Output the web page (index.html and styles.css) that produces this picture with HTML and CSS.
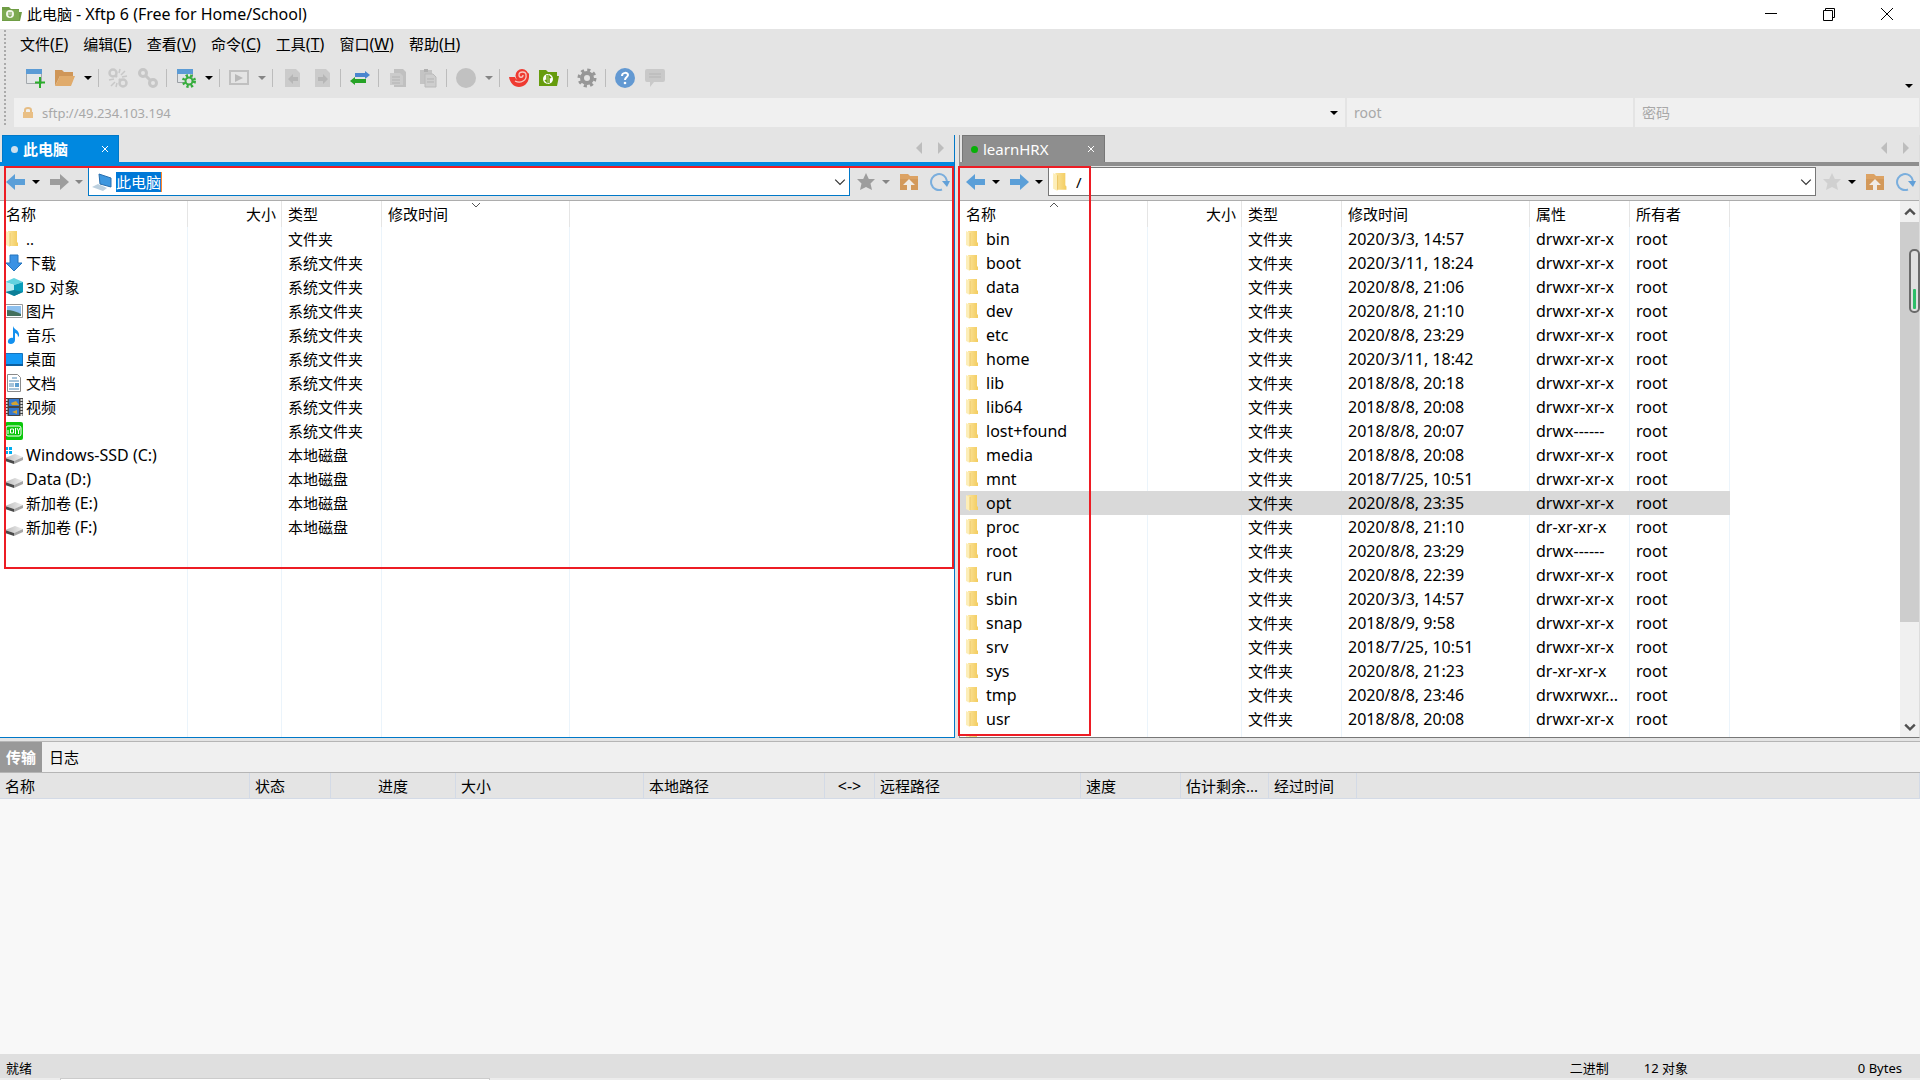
FILE: index.html
```html
<!DOCTYPE html>
<html lang="zh-CN">
<head>
    <meta charset="UTF-8">
    <meta name="viewport" content="width=device-width, initial-scale=1.0">
    <title>此电脑 - Xftp 6 (Free for Home/School)</title>
    <link rel="stylesheet" href="styles.css">
</head>
<body>
    <!-- Icon shapes used more than once -->
    <svg class="defs" aria-hidden="true">
        <defs>
            <linearGradient id="gold" x1="0" x2="1"><stop offset="0" stop-color="#fbe49b"/><stop offset="1" stop-color="#f3cc5f"/></linearGradient>
            <linearGradient id="metal" x1="0" x2="1"><stop offset="0" stop-color="#bbb"/><stop offset="1" stop-color="#eee"/></linearGradient>
        </defs>
        <symbol id="folder" viewBox="0 0 18 18"><path d="M3 1h9v11l1 1v3H5z" fill="url(#gold)"/><path d="M1 1l4 2v14l-4-2z" fill="#fdeeb8"/><path d="M5 3v13" stroke="#edc869" stroke-width="1"/></symbol>
        <symbol id="drive" viewBox="0 0 18 18"><path d="M0 12l10-4 8 3-9 4z" fill="url(#metal)"/><path d="M0 12l9 3v3l-9-3z" fill="#4a4a4a"/><path d="M9 15l9-4v3l-9 4z" fill="#a6a6a6"/></symbol>
        <symbol id="caret" viewBox="0 0 8 8"><path d="M0 2h8L4 6z" fill="currentColor"/></symbol>
        <symbol id="back" viewBox="0 0 20 20"><path d="M0 10l9-8v5h10v6H9v5z" fill="currentColor"/></symbol>
        <symbol id="forward" viewBox="0 0 20 20"><path d="M20 10l-9-8v5H1v6h10v5z" fill="currentColor"/></symbol>
        <symbol id="star" viewBox="0 0 20 20"><path d="M10 1l2.800 6H19l-4.500 4.500L16 18l-6-3-6 3 1.500-6.500L1 7h6.200z" fill="currentColor"/></symbol>
        <symbol id="up" viewBox="0 0 20 20"><path d="M1 2h8l2 2h8v14H1z" fill="#dca263"/><path d="M1 7h18v11H1z" fill="#d3995a"/><path d="M10 7l6 6h-4v5H8v-5H4z" fill="#f0ebe4"/></symbol>
        <symbol id="refresh" viewBox="0 0 20 20"><path d="M12 17.500A8 8 0 1 1 17 9" fill="none" stroke="#7aaedd" stroke-width="2"/><path d="M12 9h8l-3 6z" fill="#62a0d8"/></symbol>
        <symbol id="chev" viewBox="0 0 10 10"><path d="M1 3l4 4 4-4" fill="none" stroke="currentColor"/></symbol>
        <symbol id="close" viewBox="0 0 8 8"><path d="M1 1l6 6M7 1L1 7" stroke="currentColor"/></symbol>
        <symbol id="prev" viewBox="0 0 8 12"><path d="M7 0v12L1 6z" fill="#bdbdbd"/></symbol>
        <symbol id="next" viewBox="0 0 8 12"><path d="M1 0v12l6-6z" fill="#bdbdbd"/></symbol>
    </svg>

    <!-- Title bar -->
    <header class="titlebar">
        <svg class="app-icon" viewBox="0 0 20 16"><path d="M0 1h7l2 2h8v3h3l-2 9H0z" fill="#6f9d45"/><path d="M0 4h17v10H0z" fill="#7daa52"/><circle cx="8" cy="8" r="4" fill="#f2f7ea"/><path d="M7 6v4h2V6" fill="none" stroke="#5f8f34"/></svg>
        <h1>此电脑 <span class="wide">- Xftp 6 (Free for Home/School)</span></h1>
        <div class="window-buttons">
            <button aria-label="最小化"><svg viewBox="0 0 14 14"><path d="M1 6.500h12" stroke="#000"/></svg></button>
            <button aria-label="还原"><svg viewBox="0 0 14 14"><path d="M1.500 3.500h9v10h-9zM3.500 3.500v-2h9v9h-2" fill="none" stroke="#000"/></svg></button>
            <button aria-label="关闭"><svg viewBox="0 0 14 14"><path d="M1 1l12 12M13 1L1 13" stroke="#000"/></svg></button>
        </div>
    </header>

    <nav class="menubar">
        <button>文件<span class="wide">(<u>F</u>)</span></button>
        <button>编辑<span class="wide">(<u>E</u>)</span></button>
        <button>查看<span class="wide">(<u>V</u>)</span></button>
        <button>命令<span class="wide">(<u>C</u>)</span></button>
        <button>工具<span class="wide">(<u>T</u>)</span></button>
        <button>窗口<span class="wide">(<u>W</u>)</span></button>
        <button>帮助<span class="wide">(<u>H</u>)</span></button>
    </nav>

    <!-- Toolbar -->
    <div class="toolbar">
        <button class="tool" aria-label="新建"><svg viewBox="0 0 20 20"><path d="M1.500 1.500h15v14h-15z" fill="#e3e6e8" stroke="#a3a8ac"/><path d="M1 1h16v5H1z" fill="#5b9bd5"/><path d="M15 9v11M10 14.500h10" stroke="#2bad2b" stroke-width="2"/></svg></button>
        <button class="tool" aria-label="打开"><svg viewBox="0 0 20 20"><path d="M0 2h7l2 2h9v4H5L0 18z" fill="#cf9658"/><path d="M5 8h15l-4 10H0z" fill="#e0ab6c"/></svg></button>
        <button class="drop" aria-label="打开列表"><svg><use href="#caret"/></svg></button>
        <span class="sep"></span>
        <button class="tool" aria-label="重新连接"><svg viewBox="0 0 20 20" fill="none" stroke="#c8c8c8" stroke-width="2.500"><circle cx="5" cy="5" r="3.500"/><circle cx="15" cy="15" r="3.500"/><path d="M7 7l2 2M11 11l2 2"/><path d="M12 1l-1 4M17 3l-4 4M19 8l-5 1M1 12l5-1M3 18l4-4M8 19l1-4" stroke-width="1.500"/></svg></button>
        <button class="tool" aria-label="断开"><svg viewBox="0 0 20 20" fill="none" stroke="#c6c6c6" stroke-width="3"><circle cx="5" cy="5" r="3.500"/><circle cx="15" cy="15" r="3.500"/><path d="M7 7l6 6"/></svg></button>
        <span class="sep"></span>
        <button class="tool" aria-label="属性"><svg viewBox="0 0 20 20"><path d="M1.500 1.500h15v13h-15z" fill="#e0e4e7" stroke="#9a9fa4"/><path d="M1 1h16v5H1z" fill="#5b9bd5"/><circle cx="13" cy="13" r="5" fill="#e3e3e3" stroke="#36ad3d" stroke-width="4" stroke-dasharray="2 2"/><circle cx="13" cy="13" r="3.500" fill="#e3e3e3" stroke="#36ad3d" stroke-width="2"/></svg></button>
        <button class="drop" aria-label="属性列表"><svg><use href="#caret"/></svg></button>
        <span class="sep"></span>
        <button class="tool" aria-label="运行"><svg viewBox="0 0 20 20"><rect x="1" y="3" width="18" height="13" fill="none" stroke="#c0c0c0" stroke-width="2"/><path d="M6 6l8 4-8 4z" fill="#b8b8b8"/></svg></button>
        <button class="drop off" aria-label="运行列表"><svg><use href="#caret"/></svg></button>
        <span class="sep"></span>
        <button class="tool" aria-label="传到左侧"><svg viewBox="0 0 20 20"><path d="M3 1h11l4 4v14H3z" fill="#cbcbcb"/><path d="M6 11l5-5v3h5v4h-5v3z" fill="#b6b6b6"/></svg></button>
        <button class="tool" aria-label="传到右侧"><svg viewBox="0 0 20 20"><path d="M3 1h11l4 4v14H3z" fill="#cbcbcb"/><path d="M16 11l-5-5v3H6v4h5v3z" fill="#b6b6b6"/></svg></button>
        <span class="sep"></span>
        <button class="tool" aria-label="同步"><svg viewBox="0 0 20 20"><path d="M20 7l-5-4v2H5v4h10v2z" fill="#4a86cf"/><path d="M0 13l5-4v2h11v4H5v2z" fill="#26a326"/></svg></button>
        <span class="sep"></span>
        <button class="tool" aria-label="复制"><svg viewBox="0 0 20 20"><path d="M6 1h9l3 3v15H6z" fill="#c0c0c0"/><path d="M2 5h10l3 3v9H2z" fill="#cbcbcb"/><path d="M4 9h8M4 12h8M4 15h8" stroke="#b3b3b3"/></svg></button>
        <button class="tool" aria-label="粘贴"><svg viewBox="0 0 20 20"><path d="M2 2h12v14H2z" fill="#c4c4c4"/><path d="M6 1h4v3H6z" fill="#b0b0b0"/><path d="M7 6h8l3 3v10H7z" fill="#cecece" stroke="#bababa"/><path d="M9 11h7M9 14h7" stroke="#b3b3b3"/></svg></button>
        <span class="sep"></span>
        <button class="tool" aria-label="浏览"><svg viewBox="0 0 20 20"><circle cx="10" cy="10" r="10" fill="#c1c1c1"/></svg></button>
        <button class="drop off" aria-label="浏览列表"><svg><use href="#caret"/></svg></button>
        <span class="sep"></span>
        <button class="tool" aria-label="Xshell"><svg viewBox="0 0 20 20"><path d="M0 9h6c1 3 3 3 6 2l8-6c1 9-4 14-10 14C5 19 1 15 0 9z" fill="#ef3a31"/><circle cx="13" cy="7.500" r="6.500" fill="#ef3a31"/><path d="M6 13c6 3 12-1 11-6 0-4-7-4-7 0 0 3 4 3 4 0" fill="none" stroke="#f7c9c4" stroke-width="1.300"/></svg></button>
        <button class="tool" aria-label="Xftp"><svg viewBox="0 0 20 20"><path d="M0 2h7l2 2h9v4h2l-2 10H0z" fill="#669c0d"/><circle cx="9" cy="11" r="5" fill="#fff"/><path d="M8 7v7l-2-2M10 15V8l2 2" fill="none" stroke="#669c0d" stroke-width="1.500"/></svg></button>
        <span class="sep"></span>
        <button class="tool" aria-label="选项"><svg viewBox="0 0 20 20"><circle cx="10" cy="10" r="8" fill="none" stroke="#979797" stroke-width="3" stroke-dasharray="3.140 3.140"/><circle cx="10" cy="10" r="5" fill="#e3e3e3" stroke="#979797" stroke-width="4"/></svg></button>
        <span class="sep"></span>
        <button class="tool" aria-label="帮助"><svg viewBox="0 0 20 20"><circle cx="10" cy="10" r="10" fill="#6399d2"/><path d="M7 8c0-4 6-4 6-1 0 2-3 2-3 5" fill="none" stroke="#fff" stroke-width="2"/><circle cx="10" cy="15" r="1.300" fill="#fff"/></svg></button>
        <button class="tool" aria-label="反馈"><svg viewBox="0 0 20 20"><path d="M2 1h16q2 0 2 2v9q0 2-2 2H9l-4 5v-5H2q-2 0-2-2V3q0-2 2-2z" fill="#c9c9c9"/><path d="M4 6h12M4 9h12" stroke="#b5b5b5"/></svg></button>
        <button class="drop more" aria-label="更多"><svg><use href="#caret"/></svg></button>
    </div>

    <!-- Quick connect -->
    <form class="connect">
        <div class="host">
            <svg class="lock" viewBox="0 0 10 12"><path d="M2 6V3q0-2 3-2t3 2v3" fill="none" stroke="#e6bd84" stroke-width="2"/><path d="M0 5h10v6H0z" fill="#e9bf85"/></svg>
            <input type="text" placeholder="sftp://49.234.103.194" aria-label="主机">
            <button type="button" class="drop" aria-label="主机列表"><svg><use href="#caret"/></svg></button>
        </div>
        <input class="user" type="text" placeholder="root" aria-label="用户名">
        <input class="pass" type="password" placeholder="密码" aria-label="密码">
    </form>

    <main class="workspace">
        <!-- Local -->
        <section class="pane local">
            <div class="tabs">
                <button class="tab"><i></i><span>此电脑</span><svg><use href="#close"/></svg></button>
                <div class="tab-nav"><button aria-label="上一个"><svg><use href="#prev"/></svg></button><button aria-label="下一个"><svg><use href="#next"/></svg></button></div>
            </div>
            <div class="pathbar">
                <button class="nav" aria-label="后退"><svg><use href="#back"/></svg></button>
                <button class="drop" aria-label="后退列表"><svg><use href="#caret"/></svg></button>
                <button class="nav off" aria-label="前进"><svg><use href="#forward"/></svg></button>
                <button class="drop off" aria-label="前进列表"><svg><use href="#caret"/></svg></button>
                <div class="path">
                    <svg class="path-icon" viewBox="0 0 20 20"><path d="M7 2l12 4v9L8 12z" fill="#3d97df" stroke="#2a6fae"/><path d="M0 15l6-3 9 4-4 3z" fill="#bcd0df"/></svg>
                    <input class="selected" type="text" value="此电脑" aria-label="本地路径">
                    <button class="open" aria-label="路径列表"><svg><use href="#chev"/></svg></button>
                </div>
                <button class="nav fav" aria-label="收藏"><svg><use href="#star"/></svg></button>
                <button class="drop off" aria-label="收藏列表"><svg><use href="#caret"/></svg></button>
                <button class="nav parent" aria-label="上级"><svg><use href="#up"/></svg></button>
                <button class="nav" aria-label="刷新"><svg><use href="#refresh"/></svg></button>
            </div>
            <div class="list">
                <table class="files">
                    <colgroup><col class="c-name"><col class="c-size"><col class="c-type"><col class="c-date"><col></colgroup>
                    <thead>
                        <tr><th>名称</th><th class="num">大小</th><th>类型</th><th>修改时间<svg class="sort"><use href="#chev"/></svg></th><th></th></tr>
                    </thead>
                    <tbody>
                        <tr><td><svg><use href="#folder"/></svg>..</td><td></td><td>文件夹</td><td></td><td></td></tr>
                        <tr><td><svg viewBox="0 0 18 18"><path d="M5 1h8v8h4l-8 8-8-8h4z" fill="#3b92e4" stroke="#2474bd"/></svg>下载</td><td></td><td>系统文件夹</td><td></td><td></td></tr>
                        <tr><td><svg viewBox="0 0 18 18"><path d="M0 4l9-4 9 4-9 3z" fill="#62d3e0"/><path d="M0 4l9 3v11l-9-4z" fill="#b5edf2"/><path d="M9 7l9-3v10l-9 4z" fill="#0a9dba"/><path d="M0 14l9-2 9 2-9 4z" fill="#0c7f98"/></svg>3D 对象</td><td></td><td>系统文件夹</td><td></td><td></td></tr>
                        <tr><td><svg viewBox="0 0 18 18"><path d="M.500 2.500h17v13H.500z" fill="#fff" stroke="#999"/><path d="M2 4h14v10H2z" fill="#8dc0ee"/><path d="M2 8q6 0 14 4v2H2z" fill="#43705d"/></svg>图片</td><td></td><td>系统文件夹</td><td></td><td></td></tr>
                        <tr><td><svg viewBox="0 0 18 18"><path d="M8 0c1 4 7 4 6 10l-1 1c0-3-2-4-3-4v7c0 5-8 5-7 1 0-2 3-4 5-3z" fill="#1290ef"/></svg>音乐</td><td></td><td>系统文件夹</td><td></td><td></td></tr>
                        <tr><td><svg viewBox="0 0 18 18"><path d="M.500 3.500h17v12H.500z" fill="#1499f5" stroke="#1574bd"/><path d="M0 14h18v2H0z" fill="#0b5f9f"/></svg>桌面</td><td></td><td>系统文件夹</td><td></td><td></td></tr>
                        <tr><td><svg viewBox="0 0 18 18"><path d="M2.500.500h10l3 3v14h-13z" fill="#fff" stroke="#8a8a8a"/><path d="M7 4h5M4 7h10M4 10h5M4 12h5M4 15h10" stroke="#4f88b5"/><path d="M10 9h4v4h-4z" fill="#5d9ed0"/></svg>文档</td><td></td><td>系统文件夹</td><td></td><td></td></tr>
                        <tr><td><svg viewBox="0 0 18 18"><path d="M0 0h18v18H0z" fill="#444"/><path d="M4 1h10v7H4zM4 10h10v7H4z" fill="#3478cf"/><path d="M6 5l5-2 3 4H7zM7 14l5-2v4z" fill="#d3a233"/><path d="M1.500 1v17M16.500 1v17" stroke="#ddd" stroke-width="2" stroke-dasharray="2 1"/></svg>视频</td><td></td><td>系统文件夹</td><td></td><td></td></tr>
                        <tr><td><svg viewBox="0 0 18 18"><rect width="18" height="18" rx="2" fill="#0bc70b"/><rect x="1" y="4" width="15" height="10" rx="2" fill="none" stroke="#fff"/><path d="M3 8v4M5.500 7h3v4h-3zM10.500 6v6M12 6l1.500 3L15 6M13.500 9v3" fill="none" stroke="#fff"/></svg></td><td></td><td>系统文件夹</td><td></td><td></td></tr>
                        <tr><td><svg viewBox="0 0 18 18"><use href="#drive"/><path d="M0 1h3v3H0zM4 1h3v3H4zM0 5h3v3H0zM4 5h3v3H4z" fill="#00adef"/></svg><span class="wide">Windows-SSD (C:)</span></td><td></td><td>本地磁盘</td><td></td><td></td></tr>
                        <tr><td><svg><use href="#drive"/></svg><span class="wide">Data (D:)</span></td><td></td><td>本地磁盘</td><td></td><td></td></tr>
                        <tr><td><svg><use href="#drive"/></svg>新加卷 <span class="wide">(E:)</span></td><td></td><td>本地磁盘</td><td></td><td></td></tr>
                        <tr><td><svg><use href="#drive"/></svg>新加卷 <span class="wide">(F:)</span></td><td></td><td>本地磁盘</td><td></td><td></td></tr>
                        <tr class="rest"><td></td><td></td><td></td><td></td><td></td></tr>
                    </tbody>
                </table>
            </div>
            <div class="mark mark-local"></div>
        </section>

        <!-- Remote -->
        <section class="pane remote">
            <div class="tabs">
                <button class="tab"><i></i><span>learnHRX</span><svg><use href="#close"/></svg></button>
                <div class="tab-nav"><button aria-label="上一个"><svg><use href="#prev"/></svg></button><button aria-label="下一个"><svg><use href="#next"/></svg></button></div>
            </div>
            <div class="pathbar">
                <button class="nav" aria-label="后退"><svg><use href="#back"/></svg></button>
                <button class="drop" aria-label="后退列表"><svg><use href="#caret"/></svg></button>
                <button class="nav" aria-label="前进"><svg><use href="#forward"/></svg></button>
                <button class="drop" aria-label="前进列表"><svg><use href="#caret"/></svg></button>
                <div class="path">
                    <svg class="path-icon"><use href="#folder"/></svg>
                    <input type="text" value="/" aria-label="远程路径">
                    <button class="open" aria-label="路径列表"><svg><use href="#chev"/></svg></button>
                </div>
                <button class="nav fav" aria-label="收藏"><svg><use href="#star"/></svg></button>
                <button class="drop" aria-label="收藏列表"><svg><use href="#caret"/></svg></button>
                <button class="nav parent" aria-label="上级"><svg><use href="#up"/></svg></button>
                <button class="nav" aria-label="刷新"><svg><use href="#refresh"/></svg></button>
            </div>
            <div class="list">
                <table class="files">
                    <colgroup><col class="c-name"><col class="c-size"><col class="c-type"><col class="c-date"><col class="c-attr"><col class="c-owner"><col></colgroup>
                    <thead>
                        <tr><th>名称<svg class="sort asc"><use href="#chev"/></svg></th><th class="num">大小</th><th>类型</th><th>修改时间</th><th>属性</th><th>所有者</th><th></th></tr>
                    </thead>
                    <tbody>
                        <tr><td><svg><use href="#folder"/></svg>bin</td><td></td><td>文件夹</td><td>2020/3/3, 14:57</td><td>drwxr-xr-x</td><td>root</td><td></td></tr>
                        <tr><td><svg><use href="#folder"/></svg>boot</td><td></td><td>文件夹</td><td>2020/3/11, 18:24</td><td>drwxr-xr-x</td><td>root</td><td></td></tr>
                        <tr><td><svg><use href="#folder"/></svg>data</td><td></td><td>文件夹</td><td>2020/8/8, 21:06</td><td>drwxr-xr-x</td><td>root</td><td></td></tr>
                        <tr><td><svg><use href="#folder"/></svg>dev</td><td></td><td>文件夹</td><td>2020/8/8, 21:10</td><td>drwxr-xr-x</td><td>root</td><td></td></tr>
                        <tr><td><svg><use href="#folder"/></svg>etc</td><td></td><td>文件夹</td><td>2020/8/8, 23:29</td><td>drwxr-xr-x</td><td>root</td><td></td></tr>
                        <tr><td><svg><use href="#folder"/></svg>home</td><td></td><td>文件夹</td><td>2020/3/11, 18:42</td><td>drwxr-xr-x</td><td>root</td><td></td></tr>
                        <tr><td><svg><use href="#folder"/></svg>lib</td><td></td><td>文件夹</td><td>2018/8/8, 20:18</td><td>drwxr-xr-x</td><td>root</td><td></td></tr>
                        <tr><td><svg><use href="#folder"/></svg>lib64</td><td></td><td>文件夹</td><td>2018/8/8, 20:08</td><td>drwxr-xr-x</td><td>root</td><td></td></tr>
                        <tr><td><svg><use href="#folder"/></svg>lost+found</td><td></td><td>文件夹</td><td>2018/8/8, 20:07</td><td>drwx------</td><td>root</td><td></td></tr>
                        <tr><td><svg><use href="#folder"/></svg>media</td><td></td><td>文件夹</td><td>2018/8/8, 20:08</td><td>drwxr-xr-x</td><td>root</td><td></td></tr>
                        <tr><td><svg><use href="#folder"/></svg>mnt</td><td></td><td>文件夹</td><td>2018/7/25, 10:51</td><td>drwxr-xr-x</td><td>root</td><td></td></tr>
                        <tr class="current"><td><svg><use href="#folder"/></svg>opt</td><td></td><td>文件夹</td><td>2020/8/8, 23:35</td><td>drwxr-xr-x</td><td>root</td><td></td></tr>
                        <tr><td><svg><use href="#folder"/></svg>proc</td><td></td><td>文件夹</td><td>2020/8/8, 21:10</td><td>dr-xr-xr-x</td><td>root</td><td></td></tr>
                        <tr><td><svg><use href="#folder"/></svg>root</td><td></td><td>文件夹</td><td>2020/8/8, 23:29</td><td>drwx------</td><td>root</td><td></td></tr>
                        <tr><td><svg><use href="#folder"/></svg>run</td><td></td><td>文件夹</td><td>2020/8/8, 22:39</td><td>drwxr-xr-x</td><td>root</td><td></td></tr>
                        <tr><td><svg><use href="#folder"/></svg>sbin</td><td></td><td>文件夹</td><td>2020/3/3, 14:57</td><td>drwxr-xr-x</td><td>root</td><td></td></tr>
                        <tr><td><svg><use href="#folder"/></svg>snap</td><td></td><td>文件夹</td><td>2018/8/9, 9:58</td><td>drwxr-xr-x</td><td>root</td><td></td></tr>
                        <tr><td><svg><use href="#folder"/></svg>srv</td><td></td><td>文件夹</td><td>2018/7/25, 10:51</td><td>drwxr-xr-x</td><td>root</td><td></td></tr>
                        <tr><td><svg><use href="#folder"/></svg>sys</td><td></td><td>文件夹</td><td>2020/8/8, 21:23</td><td>dr-xr-xr-x</td><td>root</td><td></td></tr>
                        <tr><td><svg><use href="#folder"/></svg>tmp</td><td></td><td>文件夹</td><td>2020/8/8, 23:46</td><td>drwxrwxr...</td><td>root</td><td></td></tr>
                        <tr><td><svg><use href="#folder"/></svg>usr</td><td></td><td>文件夹</td><td>2018/8/8, 20:08</td><td>drwxr-xr-x</td><td>root</td><td></td></tr>
                        <tr class="rest"><td><div class="peek"><svg><use href="#folder"/></svg></div></td><td></td><td></td><td></td><td></td><td></td><td></td></tr>
                    </tbody>
                </table>
                <div class="scrollbar">
                    <button class="scroll-up" aria-label="向上滚动"><svg><use href="#chev"/></svg></button>
                    <div class="track"><div class="thumb"></div></div>
                    <button aria-label="向下滚动"><svg><use href="#chev"/></svg></button>
                    <div class="meter"><i></i></div>
                </div>
            </div>
            <div class="mark mark-remote"></div>
        </section>
    </main>

    <!-- Transfers -->
    <section class="transfer">
        <div class="transfer-tabs">
            <button class="active">传输</button>
            <button>日志</button>
        </div>
        <table class="queue">
            <colgroup><col class="q-name"><col class="q-state"><col class="q-progress"><col class="q-size"><col class="q-local"><col class="q-dir"><col class="q-remote"><col class="q-speed"><col class="q-left"><col class="q-time"><col></colgroup>
            <thead>
                <tr><th>名称</th><th>状态</th><th class="mid">进度</th><th>大小</th><th>本地路径</th><th class="mid wide">&lt;-&gt;</th><th>远程路径</th><th>速度</th><th>估计剩余...</th><th>经过时间</th><th></th></tr>
            </thead>
        </table>
    </section>

    <footer class="statusbar">
        <span class="ready">就绪</span>
        <span class="mode">二进制</span>
        <span class="count">12 对象</span>
        <span class="bytes">0 Bytes</span>
    </footer>
    <div class="taskbar"><div></div></div>
</body>
</html>
```
FILE: styles.css
```css
* {
    box-sizing: border-box;
}
body {
    margin: 0;
    min-height: 100vh;
    display: flex;
    flex-direction: column;
    background: #e4e4e4;
    color: #000;
    font: 15px/24px "Noto Sans", "Noto Sans CJK SC", sans-serif;
    overflow-x: hidden;
}
button, input {
    font: inherit;
    color: inherit;
    border: 0;
    padding: 0;
    margin: 0;
    background: none;
    outline: 0;
}
button {
    display: flex;
    align-items: center;
    justify-content: center;
}
/* Latin text is set one size up from the Chinese */
.wide {
    font-size: 16px;
}
.defs {
    position: absolute;
    width: 0;
    height: 0;
}

/* Title, menu and toolbar */
.titlebar {
    display: flex;
    align-items: center;
    height: 29px;
    background: #fff;
    padding: 0 4px 2px 2px;
}
.app-icon {
    width: 20px;
    height: 16px;
    margin-right: 5px;
}
.titlebar h1 {
    margin: 0;
    font-size: 15px;
    font-weight: normal;
    flex: 1;
}
.window-buttons {
    display: flex;
}
.window-buttons button {
    width: 58px;
    height: 27px;
}
.window-buttons svg {
    width: 14px;
    height: 14px;
}
.menubar, .toolbar, .connect {
    background: radial-gradient(circle, #aaa 1px, transparent 1px) 3px 0 / 4px 4px repeat-y;
}
.menubar {
    display: flex;
    gap: 15px;
    height: 33px;
    padding: 0 0 4px 20px;
}
.toolbar {
    display: flex;
    align-items: center;
    height: 36px;
    padding: 0 4px 4px 20px;
}
.tool {
    width: 30px;
    height: 30px;
}
.tool svg {
    width: 20px;
    height: 20px;
}
.drop {
    width: 15px;
    height: 24px;
    color: #000;
}
.drop.off {
    color: #858585;
}
.drop svg {
    width: 8px;
    height: 8px;
}
.drop.more {
    margin-left: auto;
    align-items: flex-end;
}
.sep {
    width: 1px;
    height: 18px;
    margin: 0 4px 0 3px;
    background: #bcbcbc;
}
.connect {
    display: flex;
    gap: 2px;
    height: 29px;
    padding: 0 1px 0 14px;
    color: #a8a8a8;
}
.connect > * {
    background: #f0f0f0;
}
.host {
    flex: 1;
    display: flex;
    align-items: center;
    padding: 0 4px 0 9px;
}
.lock {
    width: 10px;
    height: 12px;
    margin-right: 9px;
}
.host input {
    flex: 1;
    font-size: 13px;
}
.connect ::placeholder {
    color: #a8a8a8;
    opacity: 1;
}
.user, .pass {
    width: 284px;
    padding-left: 7px;
    font-size: 14px;
}
.user {
    width: 286px;
}

/* File panes */
.workspace {
    display: grid;
    grid-template-columns: calc(50% - 5px) 1fr;
    gap: 4px;
    padding-top: 8px;
}
.pane {
    --accent: #0088e0;
    --edge: #0078c8;
    position: relative;
    display: flex;
    flex-direction: column;
    border-right: 1px solid var(--edge);
    border-bottom: 1px solid var(--edge);
    min-width: 0;
}
.remote {
    --accent: #8e8e8e;
    --edge: #777;
    border-left: 1px solid #8e8e8e;
    border-right-color: #ddd;
}
.tabs {
    display: flex;
    justify-content: space-between;
    height: 31px;
    padding-left: 2px;
    border-bottom: 4px solid var(--accent);
}
.tab {
    width: 117px;
    padding: 0 9px 0 8px;
    background: var(--accent);
    border: 1px solid var(--edge);
    border-bottom: 0;
    color: #fff;
    font-weight: bold;
}
.remote .tab {
    width: 143px;
    font-weight: normal;
}
.tab i {
    width: 7px;
    height: 7px;
    margin-right: 5px;
    border-radius: 50%;
    background: #cde0ee;
}
.remote .tab i {
    background: #07b107;
}
.tab span {
    flex: 1;
    text-align: left;
}
.tab svg {
    width: 8px;
    height: 8px;
}
.tab-nav {
    display: flex;
    gap: 14px;
    height: 26px;
    padding-right: 9px;
}
.tab-nav svg {
    width: 8px;
    height: 12px;
}
.pathbar {
    display: flex;
    align-items: center;
    height: 35px;
    padding: 0 4px 3px 6px;
    border-bottom: 1px solid #adadad;
}
.remote .pathbar {
    padding-right: 3px;
}
.nav {
    color: #5b9fd8;
}
.nav svg {
    display: block;
    width: 20px;
    height: 20px;
}
.nav.off, .fav {
    color: #9d9d9d;
}
.remote .fav {
    color: #d0d0d0;
}
.pathbar .drop {
    width: 19px;
}
.pathbar .drop + .nav {
    margin-left: 4px;
}
.path {
    flex: 1;
    display: flex;
    align-items: center;
    height: 29px;
    min-width: 0;
    padding: 0 3px;
    background: #fff;
    border: 1px solid var(--edge);
}
.path-icon {
    width: 20px;
    height: 20px;
    margin-right: 4px;
}
.path input {
    flex: 1;
    min-width: 0;
    height: 20px;
}
.path input.selected {
    flex: 0 0 46px;
    background: #0078d7;
    color: #fff;
    border-right: 1px solid #ff8728;
}
.open {
    margin-left: auto;
    color: #333;
}
.open svg {
    width: 12px;
    height: 12px;
}
.pathbar .fav {
    margin-left: 6px;
}
.pathbar .parent {
    margin: 0 11px 0 4px;
}
.list {
    flex: 1;
    display: flex;
    background: #fff;
}
.files {
    flex: 1;
    min-width: 0;
    table-layout: fixed;
    border-spacing: 0;
    border-collapse: separate;
}
.c-name, .c-date {
    width: 188px;
}
.c-size {
    width: 94px;
}
.c-type, .c-attr, .c-owner {
    width: 100px;
}
.files th, .queue th {
    position: relative;
    padding: 0 5px 0 6px;
    font-weight: normal;
    text-align: left;
    white-space: nowrap;
}
.files th {
    height: 26px;
    border-right: 1px solid #e5e5e5;
}
.files td {
    height: 24px;
    padding: 0 0 0 6px;
    border-right: 1px solid #ebf4fb;
    line-height: 20px;
    white-space: nowrap;
}
.remote .files td:not(:nth-child(3)) {
    font-size: 16px;
}
.files td:first-child {
    padding-left: 5px;
}
.files th:last-child, .files td:last-child {
    border-right: 0;
}
.files td svg {
    width: 18px;
    height: 18px;
    margin-right: 3px;
    vertical-align: -3px;
}
.files .num {
    text-align: right;
}
.files .sort {
    position: absolute;
    top: -1px;
    left: calc(50% - 5px);
    width: 10px;
    height: 10px;
    color: #555;
}
.files .asc {
    transform: scaleY(-1);
}
.files .current td:not(:last-child) {
    background: #d9d9d9;
    border-color: #d9d9d9;
}
.files .rest td {
    height: auto;
}
.remote .files .rest td {
    height: 6px;
    vertical-align: top;
}
.peek {
    height: 6px;
    padding-top: 2px;
    overflow: hidden;
}
.peek svg {
    display: block;
}
.scrollbar {
    position: relative;
    display: flex;
    flex-direction: column;
    width: 19px;
    background: #f0f0f0;
}
.scrollbar button {
    height: 21px;
    color: #505050;
}
.scrollbar svg {
    width: 12px;
    height: 12px;
    stroke-width: 2px;
}
.scroll-up svg {
    transform: scaleY(-1);
}
.track {
    flex: 1;
}
.thumb {
    height: 81%;
    background: #cdcdcd;
}
/* Floating level gauge over the scrollbar */
.meter {
    position: absolute;
    top: 48px;
    right: -1px;
    width: 11px;
    height: 64px;
    padding: 2px;
    display: flex;
    align-items: flex-end;
    border: 2px solid #6b6b6b;
    border-radius: 5px;
    background: #e0e0e0;
}
.meter i {
    width: 100%;
    height: 20px;
    background: #2dbd68;
    border-radius: 1px;
}
/* Red annotation frames */
.mark {
    position: absolute;
    border: 2px solid #ed1c24;
    pointer-events: none;
}
.mark-local {
    top: 31px;
    left: 4px;
    right: 0;
    height: 403px;
}
.mark-remote {
    top: 31px;
    left: -2px;
    bottom: 1px;
    width: 133px;
}

/* Transfer panel */
.transfer {
    flex: 1;
    margin-top: 3px;
    border-top: 1px solid #b5b5b5;
    background: #f8f8f8;
}
.transfer-tabs {
    display: flex;
    height: 31px;
    background: #f0f0f0;
    border-bottom: 1px solid #b5b5b5;
}
.transfer-tabs button {
    padding: 0 7px;
}
.transfer-tabs .active {
    padding: 0 6px;
    background: #999;
    color: #fff;
    font-weight: bold;
}
.queue {
    width: 100%;
    table-layout: fixed;
    border-spacing: 0;
    background: #e4e4e4;
}
.queue th {
    height: 26px;
    padding: 0 5px;
    border-right: 1px solid #d3dae6;
    border-bottom: 1px solid #d3dae6;
}
.queue .mid {
    text-align: center;
}
.q-name {
    width: 250px;
}
.q-state {
    width: 81px;
}
.q-progress {
    width: 125px;
}
.q-size {
    width: 188px;
}
.q-local {
    width: 181px;
}
.q-dir {
    width: 50px;
}
.q-remote {
    width: 206px;
}
.q-speed {
    width: 100px;
}
.q-left, .q-time {
    width: 88px;
}
.statusbar {
    display: flex;
    align-items: center;
    height: 24px;
    padding: 3px 18px 0 6px;
    background: #dfdfdf;
    font-size: 13px;
}
.ready {
    flex: 1;
}
.mode {
    width: 74px;
}
.count {
    width: 214px;
}
.taskbar {
    height: 2px;
    background: #ececec;
}
.taskbar div {
    width: 430px;
    height: 2px;
    margin-left: 60px;
    background: #fff;
    border: 1px solid #ccc;
    border-bottom: 0;
}
```
